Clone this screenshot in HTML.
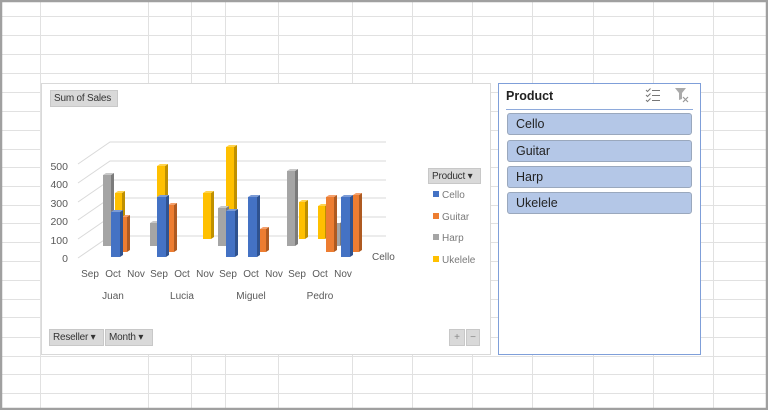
<!DOCTYPE html>
<html><head><meta charset="utf-8"><style>
body{margin:0;width:768px;height:410px;overflow:hidden;background:#fff;font-family:"Liberation Sans",sans-serif;}
.abs{position:absolute}
.btn{position:absolute;background:#d9d9d9;border:1px solid #c8c8c8;font-size:10px;color:#333;line-height:15px;padding:0 3px;box-sizing:border-box;letter-spacing:-0.2px}
.item{position:absolute;left:507px;width:185px;height:22px;background:#b4c7e7;border:1px solid #9aa8bd;border-radius:3px;box-sizing:border-box;font-size:12.5px;color:#222;padding-left:8px;line-height:20px}
</style></head><body>
<svg class="abs" style="left:0;top:0" width="768" height="410">
<g stroke="#e1e1e1" stroke-width="1">
<line x1="40.5" y1="0" x2="40.5" y2="410"/><line x1="148.5" y1="0" x2="148.5" y2="410"/><line x1="191.5" y1="0" x2="191.5" y2="410"/><line x1="225.5" y1="0" x2="225.5" y2="410"/><line x1="278.5" y1="0" x2="278.5" y2="410"/><line x1="352.5" y1="0" x2="352.5" y2="410"/><line x1="412.5" y1="0" x2="412.5" y2="410"/><line x1="472.5" y1="0" x2="472.5" y2="410"/><line x1="532.5" y1="0" x2="532.5" y2="410"/><line x1="593.5" y1="0" x2="593.5" y2="410"/><line x1="653.5" y1="0" x2="653.5" y2="410"/><line x1="713.5" y1="0" x2="713.5" y2="410"/>
<line x1="0" y1="16.5" x2="768" y2="16.5"/><line x1="0" y1="35.5" x2="768" y2="35.5"/><line x1="0" y1="54.5" x2="768" y2="54.5"/><line x1="0" y1="73.5" x2="768" y2="73.5"/><line x1="0" y1="92.5" x2="768" y2="92.5"/><line x1="0" y1="111.5" x2="768" y2="111.5"/><line x1="0" y1="130.5" x2="768" y2="130.5"/><line x1="0" y1="149.5" x2="768" y2="149.5"/><line x1="0" y1="167.5" x2="768" y2="167.5"/><line x1="0" y1="186.5" x2="768" y2="186.5"/><line x1="0" y1="205.5" x2="768" y2="205.5"/><line x1="0" y1="223.5" x2="768" y2="223.5"/><line x1="0" y1="242.5" x2="768" y2="242.5"/><line x1="0" y1="261.5" x2="768" y2="261.5"/><line x1="0" y1="280.5" x2="768" y2="280.5"/><line x1="0" y1="299.5" x2="768" y2="299.5"/><line x1="0" y1="317.5" x2="768" y2="317.5"/><line x1="0" y1="337.5" x2="768" y2="337.5"/><line x1="0" y1="356.5" x2="768" y2="356.5"/><line x1="0" y1="374.5" x2="768" y2="374.5"/><line x1="0" y1="393.5" x2="768" y2="393.5"/>
</g>
<rect x="1" y="1" width="766" height="408" fill="none" stroke="#a0a0a0" stroke-width="2.5"/>
<rect x="41.5" y="83.5" width="449" height="271" fill="#fff" stroke="#d9d9d9"/>
<rect x="498.5" y="83.5" width="202" height="271" fill="#fff" stroke="#7f9fd9"/>
<line x1="506" y1="109.5" x2="693" y2="109.5" stroke="#8eaadb"/>
<g stroke="#d9d9d9" fill="none">
<path d="M78 164 L110 142 H386 M78 183 L110 161 H386 M78 202 L110 180 H386 M78 220 L110 198 H386 M78 239 L110 217 H386 M78 258 L110 236 H386"/>
</g>
<g font-size="10.5" fill="#595959" text-anchor="end">
<text x="68" y="170">500</text><text x="68" y="188">400</text><text x="68" y="207">300</text><text x="68" y="225">200</text><text x="68" y="244">100</text><text x="68" y="262">0</text>
</g>
<g>
<rect x="115" y="193" width="7" height="46" fill="#ffc000"/><polygon points="122,193 125,191 125,237 122,239" fill="#bf9000"/><polygon points="115,193 118,191 125,191 122,193" fill="#ffd34d"/>
<rect x="157" y="166" width="8" height="73" fill="#ffc000"/><polygon points="165,166 168,164 168,237 165,239" fill="#bf9000"/><polygon points="157,166 160,164 168,164 165,166" fill="#ffd34d"/>
<rect x="203" y="193" width="8" height="46" fill="#ffc000"/><polygon points="211,193 214,191 214,237 211,239" fill="#bf9000"/><polygon points="203,193 206,191 214,191 211,193" fill="#ffd34d"/>
<rect x="226" y="147" width="8" height="92" fill="#ffc000"/><polygon points="234,147 237,145 237,237 234,239" fill="#bf9000"/><polygon points="226,147 229,145 237,145 234,147" fill="#ffd34d"/>
<rect x="299" y="202" width="6" height="37" fill="#ffc000"/><polygon points="305,202 308,200 308,237 305,239" fill="#bf9000"/><polygon points="299,202 302,200 308,200 305,202" fill="#ffd34d"/>
<rect x="318" y="206" width="7" height="33" fill="#ffc000"/><polygon points="325,206 328,204 328,237 325,239" fill="#bf9000"/><polygon points="318,206 321,204 328,204 325,206" fill="#ffd34d"/>
</g>
<g>
<rect x="103" y="175" width="8" height="71" fill="#a5a5a5"/><polygon points="111,175 114,173 114,244 111,246" fill="#7b7b7b"/><polygon points="103,175 106,173 114,173 111,175" fill="#c8c8c8"/>
<rect x="150" y="223" width="7" height="23" fill="#a5a5a5"/><polygon points="157,223 160,221 160,244 157,246" fill="#7b7b7b"/><polygon points="150,223 153,221 160,221 157,223" fill="#c8c8c8"/>
<rect x="218" y="208" width="8" height="38" fill="#a5a5a5"/><polygon points="226,208 229,206 229,244 226,246" fill="#7b7b7b"/><polygon points="218,208 221,206 229,206 226,208" fill="#c8c8c8"/>
<rect x="287" y="171" width="8" height="75" fill="#a5a5a5"/><polygon points="295,171 298,169 298,244 295,246" fill="#7b7b7b"/><polygon points="287,171 290,169 298,169 295,171" fill="#c8c8c8"/>
<rect x="335" y="223" width="5" height="23" fill="#a5a5a5"/><polygon points="340,223 343,221 343,244 340,246" fill="#7b7b7b"/>
</g>
<g>
<rect x="122" y="217" width="5" height="35" fill="#ed7d31"/><polygon points="127,217 130,215 130,250 127,252" fill="#ae5a21"/><polygon points="122,217 125,215 130,215 127,217" fill="#f4a06c"/>
<rect x="168" y="205" width="6" height="47" fill="#ed7d31"/><polygon points="174,205 177,203 177,250 174,252" fill="#ae5a21"/><polygon points="168,205 171,203 177,203 174,205" fill="#f4a06c"/>
<rect x="260" y="229" width="6" height="23" fill="#ed7d31"/><polygon points="266,229 269,227 269,250 266,252" fill="#ae5a21"/><polygon points="260,229 263,227 269,227 266,229" fill="#f4a06c"/>
<rect x="326" y="197" width="8" height="55" fill="#ed7d31"/><polygon points="334,197 337,195 337,250 334,252" fill="#ae5a21"/><polygon points="326,197 329,195 337,195 334,197" fill="#f4a06c"/>
<rect x="353" y="195" width="6" height="57" fill="#ed7d31"/><polygon points="359,195 362,193 362,250 359,252" fill="#ae5a21"/><polygon points="353,195 356,193 362,193 359,195" fill="#f4a06c"/>
</g>
<g>
<rect x="111" y="212" width="9" height="45" fill="#4472c4"/><polygon points="120,212 123,210 123,255 120,257" fill="#2f528f"/><polygon points="111,212 114,210 123,210 120,212" fill="#7b9bd6"/>
<rect x="157" y="197" width="9" height="60" fill="#4472c4"/><polygon points="166,197 169,195 169,255 166,257" fill="#2f528f"/><polygon points="157,197 160,195 169,195 166,197" fill="#7b9bd6"/>
<rect x="226" y="211" width="9" height="46" fill="#4472c4"/><polygon points="235,211 238,209 238,255 235,257" fill="#2f528f"/><polygon points="226,211 229,209 238,209 235,211" fill="#7b9bd6"/>
<rect x="248" y="197" width="9" height="60" fill="#4472c4"/><polygon points="257,197 260,195 260,255 257,257" fill="#2f528f"/><polygon points="248,197 251,195 260,195 257,197" fill="#7b9bd6"/>
<rect x="341" y="197" width="9" height="60" fill="#4472c4"/><polygon points="350,197 353,195 353,255 350,257" fill="#2f528f"/><polygon points="341,197 344,195 353,195 350,197" fill="#7b9bd6"/>
</g>
<text x="372" y="260" font-size="10" fill="#595959">Cello</text>
<g font-size="10" fill="#595959" text-anchor="middle">
<text x="90" y="277">Sep</text><text x="113" y="277">Oct</text><text x="136" y="277">Nov</text>
<text x="159" y="277">Sep</text><text x="182" y="277">Oct</text><text x="205" y="277">Nov</text>
<text x="228" y="277">Sep</text><text x="251" y="277">Oct</text><text x="274" y="277">Nov</text>
<text x="297" y="277">Sep</text><text x="320" y="277">Oct</text><text x="343" y="277">Nov</text>
<text x="113" y="299">Juan</text><text x="182" y="299">Lucia</text><text x="251" y="299">Miguel</text><text x="320" y="299">Pedro</text>
</g>
<g font-size="10" fill="#7a7a7a">
<rect x="433" y="191" width="6" height="6" fill="#4472c4"/><text x="442" y="198">Cello</text>
<rect x="433" y="213" width="6" height="6" fill="#ed7d31"/><text x="442" y="220">Guitar</text>
<rect x="433" y="234" width="6" height="6" fill="#a5a5a5"/><text x="442" y="241">Harp</text>
<rect x="433" y="256" width="6" height="6" fill="#ffc000"/><text x="442" y="263">Ukelele</text>
</g>
<g stroke="#777" stroke-width="1" fill="none">
<path d="M646 90 l1.5 1.5 l3 -3 M652 90.5 h8 M646 95 l1.5 1.5 l3 -3 M652 95.5 h8 M646 100 l1.5 1.5 l3 -3 M652 100.5 h8"/>
</g>
<path d="M675 88 h11 l-4 5 v6 l-3 1 v-7 z" fill="#aaa"/>
<path d="M683 97 l5 5 M688 97 l-5 5" stroke="#999" stroke-width="1.2"/>
</svg>
<div class="btn" style="left:50px;top:90px;width:68px;height:17px;">Sum of Sales</div>
<div class="btn" style="left:428px;top:168px;width:53px;height:16px;">Product ▾</div>
<div class="btn" style="left:49px;top:329px;width:55px;height:17px;">Reseller ▾</div>
<div class="btn" style="left:105px;top:329px;width:48px;height:17px;">Month ▾</div>
<div class="btn" style="left:449px;top:329px;width:16px;height:17px;color:#888;text-align:center;padding:0">+</div>
<div class="btn" style="left:466px;top:329px;width:14px;height:17px;color:#888;text-align:center;padding:0">−</div>
<div class="abs" style="left:506px;top:89px;font-size:12.5px;font-weight:bold;color:#222">Product</div>
<div class="item" style="top:113px">Cello</div>
<div class="item" style="top:140px">Guitar</div>
<div class="item" style="top:166px">Harp</div>
<div class="item" style="top:192px">Ukelele</div>
</body></html>
